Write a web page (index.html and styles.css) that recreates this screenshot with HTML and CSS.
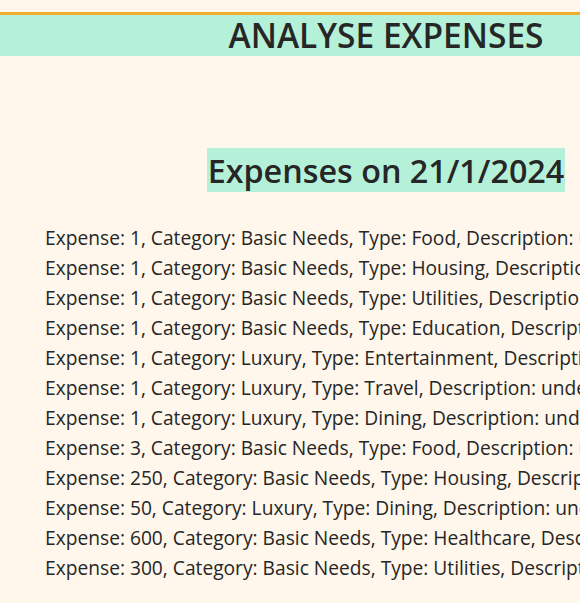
FILE: index.html
```html
<!DOCTYPE html>
<html lang="en">
<head>
<meta charset="utf-8">
<title>Analyse Expenses</title>
<link rel="stylesheet" href="styles.css">
</head>
<body>
<div class="page">
  <header class="top">
    <h1 class="title">ANALYSE EXPENSES</h1>
  </header>
  <section class="day">
    <h2 class="day-title"><span class="day-label">Expenses on 21/1/2024</span></h2>
    <ul class="list">
      <li>Expense: 1, Category: Basic Needs, Type: Food, Description: undefined</li>
      <li>Expense: 1, Category: Basic Needs, Type: Housing, Description: undefined</li>
      <li>Expense: 1, Category: Basic Needs, Type: Utilities, Description: undefined</li>
      <li>Expense: 1, Category: Basic Needs, Type: Education, Description: undefined</li>
      <li>Expense: 1, Category: Luxury, Type: Entertainment, Description: undefined</li>
      <li>Expense: 1, Category: Luxury, Type: Travel, Description: undefined</li>
      <li>Expense: 1, Category: Luxury, Type: Dining, Description: undefined</li>
      <li>Expense: 3, Category: Basic Needs, Type: Food, Description: undefined</li>
      <li>Expense: 250, Category: Basic Needs, Type: Housing, Description: undefined</li>
      <li>Expense: 50, Category: Luxury, Type: Dining, Description: undefined</li>
      <li>Expense: 600, Category: Basic Needs, Type: Healthcare, Description: undefined</li>
      <li>Expense: 300, Category: Basic Needs, Type: Utilities, Description: undefined</li>
    </ul>
  </section>
</div>
</body>
</html>
```
FILE: styles.css
```css
html, body {
  margin: 0;
  padding: 0;
  background: #fff7ec;
  overflow: hidden;
}
body {
  font-family: "Open Sans", "Noto Sans", sans-serif;
  color: #262626;
}
.page {
  width: 772px;
  padding-top: 12px;
}
.top {
  border-top: 3px solid #ecb02c;
  background: #b5f1d9;
}
.title {
  margin: 0;
  height: 41px;
  line-height: 41px;
  text-align: center;
  font-size: 33.5px;
  font-weight: 600;
}
.day {
  padding-top: 94px;
}
.day-title {
  margin: 0;
  text-align: center;
  font-size: 32.3px;
  font-weight: 600;
  line-height: 41px;
}
.day-label {
  background: #b5f1d9;
  padding: 0 1px;
}
.list {
  list-style: none;
  margin: 0;
  padding: 32px 0 0 45px;
  font-size: 19.2px;
  line-height: 30px;
  white-space: nowrap;
}
```
